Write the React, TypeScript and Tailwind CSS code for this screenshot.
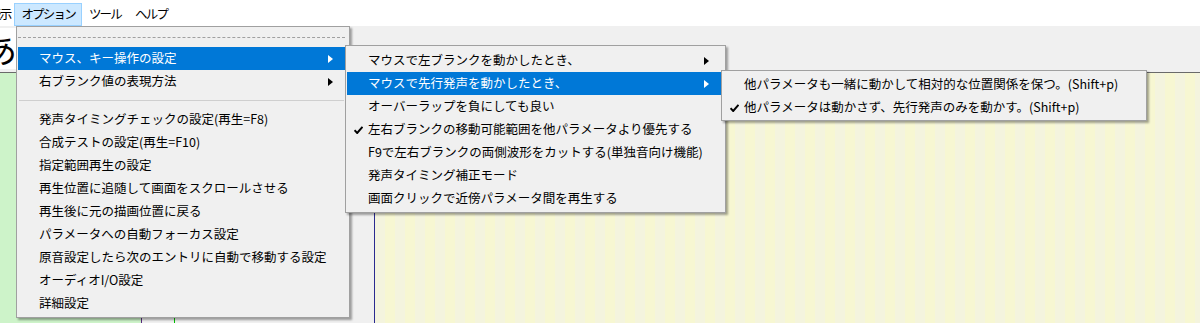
import { ReactNode } from 'react';

const font = 'font-["Noto_Sans_CJK_JP","Noto_Sans",sans-serif]';

type Item = {
  label?: string;
  checked?: boolean;
  sub?: boolean;
  active?: boolean;
  sep?: boolean;
};

function Arrow({ white }: { white?: boolean }) {
  return (
    <svg width="5" height="8" viewBox="0 0 5 8" className="shrink-0">
      <path d="M0 0 L5 4 L0 8 Z" fill={white ? '#ffffff' : '#000000'} />
    </svg>
  );
}

function Check({ white }: { white?: boolean }) {
  return (
    <svg width="9" height="8" viewBox="0 0 9 8" className="shrink-0">
      <path
        d="M0.5 4.2 L3.2 7 L8.5 0.8"
        fill="none"
        stroke={white ? '#ffffff' : '#000000'}
        strokeWidth="2"
      />
    </svg>
  );
}

function MenuRow({ item }: { item: Item }) {
  if (item.sep) {
    return (
      <div className="h-[15px] flex items-center pl-[1px] pr-[1px]">
        <div className="w-full h-px bg-[#cfcfcf]" />
      </div>
    );
  }
  return (
    <div
      className={`h-[23px] flex items-center ${
        item.active ? 'bg-[#0078d7] text-white' : 'text-black'
      }`}
    >
      <div className="w-[21px] flex justify-center pl-[1px]">
        {item.checked && <Check white={item.active} />}
      </div>
      <div className="flex-1 whitespace-nowrap">{item.label}</div>
      <div className="w-[17px] flex">{item.sub && <Arrow white={item.active} />}</div>
    </div>
  );
}

function Menu({
  items,
  className,
  tearOff,
}: {
  items: Item[];
  className: string;
  tearOff?: boolean;
}) {
  return (
    <div
      className={`absolute bg-[#f0f0f0] border border-[#a0a0a0] shadow-[2px_2px_2px_rgba(0,0,0,0.35)] pl-[1px] pr-[4px] text-[12.5px] leading-none ${className}`}
    >
      {tearOff && (
        <div className="h-[20px] flex items-center">
          <div className="w-full border-t border-dashed border-[#a0a0a0]" />
        </div>
      )}
      {items.map((it, i) => (
        <MenuRow key={i} item={it} />
      ))}
    </div>
  );
}

function MenuBarItem({ children, active }: { children: ReactNode; active?: boolean }) {
  return (
    <div
      className={`h-[23px] flex items-center px-[6px] ${
        active ? 'bg-[#cce8ff] border border-[#99d1ff]' : 'border border-transparent'
      }`}
    >
      {children}
    </div>
  );
}

export default function App() {
  const mainItems: Item[] = [
    { label: 'マウス、キー操作の設定', sub: true, active: true },
    { label: '右ブランク値の表現方法', sub: true },
    { sep: true },
    { label: '発声タイミングチェックの設定(再生=F8)' },
    { label: '合成テストの設定(再生=F10)' },
    { label: '指定範囲再生の設定' },
    { label: '再生位置に追随して画面をスクロールさせる' },
    { label: '再生後に元の描画位置に戻る' },
    { label: 'パラメータへの自動フォーカス設定' },
    { label: '原音設定したら次のエントリに自動で移動する設定' },
    { label: 'オーディオI/O設定' },
    { label: '詳細設定' },
  ];

  const mouseItems: Item[] = [
    { label: 'マウスで左ブランクを動かしたとき、', sub: true },
    { label: 'マウスで先行発声を動かしたとき、', sub: true, active: true },
    { label: 'オーバーラップを負にしても良い' },
    { label: '左右ブランクの移動可能範囲を他パラメータより優先する', checked: true },
    { label: 'F9で左右ブランクの両側波形をカットする(単独音向け機能)' },
    { label: '発声タイミング補正モード' },
    { label: '画面クリックで近傍パラメータ間を再生する' },
  ];

  const preItems: Item[] = [
    { label: '他パラメータも一緒に動かして相対的な位置関係を保つ。(Shift+p)' },
    { label: '他パラメータは動かさず、先行発声のみを動かす。(Shift+p)', checked: true },
  ];

  return (
    <div className={`relative w-[1200px] h-[323px] overflow-hidden bg-[#f0f0f0] ${font}`}>
      {/* menu bar */}
      <div className="h-[26px] bg-white flex items-start pt-[3px] text-[12.5px] leading-none tracking-[-1.8px] text-black">
        <div className="h-[23px] flex items-center ml-[-11px] mr-[4px]">表示</div>
        <MenuBarItem active>オプション</MenuBarItem>
        <MenuBarItem>ツール</MenuBarItem>
        <MenuBarItem>ヘルプ</MenuBarItem>
      </div>

      {/* toolbar strip */}
      <div className="h-[46px] flex">
        <div className="w-[16px] mt-[2px] mb-[3px] bg-white overflow-hidden flex items-center">
          <span className="text-[34px] leading-none ml-[-17px] text-black">あ</span>
        </div>
      </div>
      <div className="h-px bg-[#6a6a6a]" />

      {/* editing canvas */}
      <div className="h-[250px] flex">
        <div className="w-[141px] bg-[#cdf3c9]" />
        <div className="w-px bg-[#5a2a80]" />
        <div className="w-[32px] bg-[#f0f0f0]" />
        <div className="w-px bg-[#00c000]" />
        <div className="w-[199px] bg-[#f0f0f0]" />
        <div className="w-px bg-[#2a2a90]" />
        <div className="flex-1 bg-[repeating-linear-gradient(90deg,#f4f4de_0px,#f4f4de_10px,#f7f7d2_10px,#f7f7d2_20px)]" />
      </div>

      <Menu items={mainItems} tearOff className="left-[16px] top-[26px] w-[334px] pb-[2px]" />
      <Menu items={mouseItems} className="left-[345px] top-[45px] w-[381px] pt-[3px] pb-[2px]" />
      <Menu items={preItems} className="left-[721px] top-[70px] w-[426px] pt-[2px] pb-[1px]" />
    </div>
  );
}
